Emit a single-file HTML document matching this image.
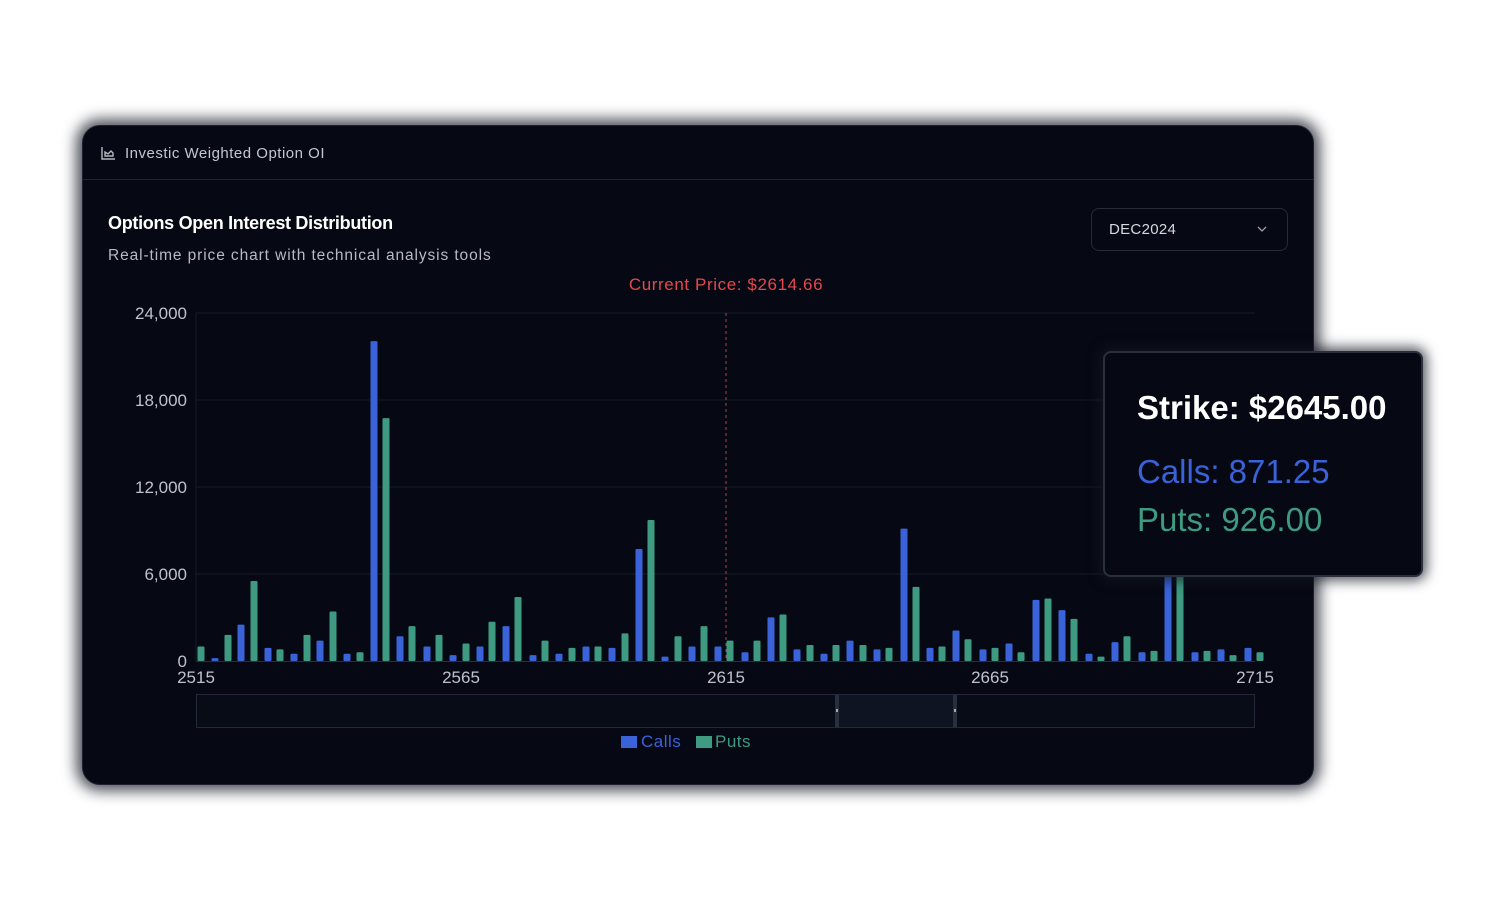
<!DOCTYPE html>
<html><head><meta charset="utf-8"><style>
*{margin:0;padding:0;box-sizing:border-box}
body{width:1506px;height:910px;background:#fff;position:relative;overflow:hidden;font-family:"Liberation Sans",sans-serif}
.card{position:absolute;left:82px;top:125px;width:1232px;height:660px;background:#060913;border-radius:18px;border:1px solid #1c2130;box-shadow:0 0 14px 6px rgba(20,24,36,.75)}
.hdr{position:absolute;left:0;top:0;right:0;height:54px;border-bottom:1px solid #1f2433}
.hdr span{position:absolute;left:42px;top:19px;color:#c4c7cf;font-size:15px;letter-spacing:.5px}
.t1{position:absolute;left:25px;top:87px;color:#fff;font-size:18px;font-weight:bold;letter-spacing:-.3px}
.t2{position:absolute;left:25px;top:121px;color:#b7bac2;font-size:15.5px;letter-spacing:.9px}
.dd{position:absolute;left:1008px;top:82px;width:197px;height:43px;border:1px solid #262b3a;border-radius:8px;color:#d7d9df;font-size:15px;padding:12px 17px;letter-spacing:.3px}
.tip{position:absolute;left:1103px;top:351px;width:320px;height:226px;background:#060913;border:2px solid #2a2f3d;border-radius:8px;box-shadow:0 0 12px 4px rgba(20,24,36,.7)}
.tip div{position:absolute;left:32px;font-size:33px}
</style></head><body>
<div class="card">
<div class="hdr"><svg style="position:absolute;left:18px;top:20px" width="15" height="14" viewBox="0 0 15 14" fill="none" stroke="#b5b8c0" stroke-width="1.4"><path d="M1 1v12h13"/><path d="M4 10V6l3 2 3-3 2 2v3z"/></svg><span>Investic Weighted Option OI</span></div>
<div class="t1">Options Open Interest Distribution</div>
<div class="t2">Real-time price chart with technical analysis tools</div>
<div class="dd">DEC2024<svg style="position:absolute;right:20px;top:17px" width="10" height="7" viewBox="0 0 10 7"><path d="M1 1l4 4 4-4" stroke="#9a9ea8" fill="none" stroke-width="1.3"/></svg></div>
</div>
<svg style="position:absolute;left:0;top:0" width="1506" height="910" font-family="Liberation Sans, sans-serif">
<g stroke="#161b28" stroke-width="1"><line x1="196" y1="313" x2="1255" y2="313"/><line x1="196" y1="400" x2="1255" y2="400"/><line x1="196" y1="487" x2="1255" y2="487"/><line x1="196" y1="574" x2="1255" y2="574"/><line x1="196" y1="313" x2="196" y2="661"/></g>
<line x1="196" y1="661.5" x2="1255" y2="661.5" stroke="#2a2f3c"/>
<g fill="#bfc2c9" font-size="17" text-anchor="end"><text x="187" y="319">24,000</text><text x="187" y="406">18,000</text><text x="187" y="493">12,000</text><text x="187" y="580">6,000</text><text x="187" y="667">0</text></g>
<g fill="#bfc2c9" font-size="17" text-anchor="middle"><text x="196" y="683">2515</text><text x="461" y="683">2565</text><text x="726" y="683">2615</text><text x="990" y="683">2665</text><text x="1255" y="683">2715</text></g>
<text x="726" y="290" fill="#e5484d" font-size="17" text-anchor="middle" letter-spacing=".6">Current Price: $2614.66</text>
<line x1="726" y1="313" x2="726" y2="661" stroke="#e5484d" stroke-dasharray="3,3" stroke-width="1" opacity=".8"/>
<g id="bars"></g>
<rect x="196.5" y="694.5" width="1058" height="33" fill="#080c17" stroke="#23283a"/>
<rect x="838" y="695" width="117" height="32" fill="#0f1422"/>
<rect x="835" y="695" width="4" height="32" fill="#2a2f3d"/><rect x="953" y="695" width="4" height="32" fill="#2a2f3d"/>
<rect x="836" y="709" width="2" height="3" fill="#aaa"/><rect x="954" y="709" width="2" height="3" fill="#aaa"/>
<rect x="621" y="736" width="16" height="12" fill="#3a62d9"/><text x="641" y="747" fill="#3a62d9" font-size="17" letter-spacing=".5">Calls</text>
<rect x="696" y="736" width="16" height="12" fill="#3e9a80"/><text x="715" y="747" fill="#3e9a80" font-size="17" letter-spacing=".5">Puts</text>
</svg>
<div class="tip"><div style="top:36px;color:#fff;font-weight:bold">Strike: $2645.00</div><div style="top:100px;color:#3a62d9">Calls: 871.25</div><div style="top:148px;color:#3e9a80">Puts: 926.00</div></div>
<script>
var d=[[201,'g',1000],[215,'b',200],[228,'g',1800],[241,'b',2500],[254,'g',5500],[268,'b',900],[280,'g',800],[294,'b',500],[307,'g',1800],[320,'b',1400],[333,'g',3400],[347,'b',500],[360,'g',600],[374,'b',22000],[386,'g',16700],[400,'b',1700],[412,'g',2400],[427,'b',1000],[439,'g',1800],[453,'b',400],[466,'g',1200],[480,'b',1000],[492,'g',2700],[506,'b',2400],[518,'g',4400],[533,'b',400],[545,'g',1400],[559,'b',500],[572,'g',900],[586,'b',1000],[598,'g',1000],[612,'b',900],[625,'g',1900],[639,'b',7700],[651,'g',9700],[665,'b',300],[678,'g',1700],[692,'b',1000],[704,'g',2400],[718,'b',1000],[730,'g',1400],[745,'b',600],[757,'g',1400],[771,'b',3000],[783,'g',3200],[797,'b',800],[810,'g',1100],[824,'b',500],[836,'g',1100],[850,'b',1400],[863,'g',1100],[877,'b',800],[889,'g',900],[904,'b',9100],[916,'g',5100],[930,'b',900],[942,'g',1000],[956,'b',2100],[968,'g',1500],[983,'b',800],[995,'g',900],[1009,'b',1200],[1021,'g',600],[1036,'b',4200],[1048,'g',4300],[1062,'b',3500],[1074,'g',2900],[1089,'b',500],[1101,'g',300],[1115,'b',1300],[1127,'g',1700],[1142,'b',600],[1154,'g',700],[1168,'b',9000],[1180,'g',7000],[1195,'b',600],[1207,'g',700],[1221,'b',800],[1233,'g',400],[1248,'b',900],[1260,'g',600]];
var s='';d.forEach(function(b){var h=b[2]*349/24000;s+='<rect x="'+(b[0]-3.5)+'" y="'+(661-h)+'" width="7" height="'+h+'" rx="1" fill="'+(b[1]=='b'?'#3a62d9':'#3e9a80')+'"/>';});
document.getElementById('bars').innerHTML=s;
</script>
</body></html>
